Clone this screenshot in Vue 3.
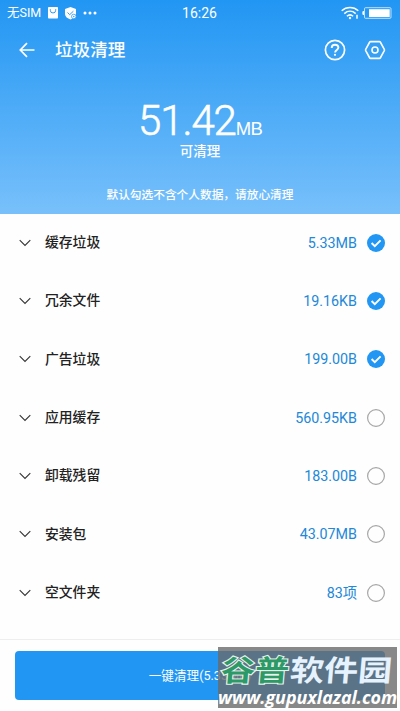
<script setup>
const rows = [
  { name: '缓存垃圾', size: '5.33MB', on: true },
  { name: '冗余文件', size: '19.16KB', on: true },
  { name: '广告垃圾', size: '199.00B', on: true },
  { name: '应用缓存', size: '560.95KB', on: false },
  { name: '卸载残留', size: '183.00B', on: false },
  { name: '安装包', size: '43.07MB', on: false },
  { name: '空文件夹', size: '83项', on: false },
]
</script>

<template>
  <div class="screen">
    <header class="hero">
      <div class="status">
        <div class="side">
          <span class="sim">无SIM</span>
          <svg class="bag" width="10" height="12" viewBox="0 0 10 12">
            <rect width="10" height="11.5" rx=".8" fill="#fff" />
            <path d="M2.3 2.2v1.1a2.7 2.7 0 0 0 5.4 0V2.2" fill="none" stroke="#2f9cf3" stroke-width="1" />
          </svg>
          <svg class="shield" width="12" height="13" viewBox="0 0 12 13">
            <path d="M5.5 0 11 2v5c0 2.700-2.500 4.500-5.500 5.500C2.500 11.500 0 9.700 0 7V2Z" fill="#fff" />
            <path d="m2.500 5.500 2.200 2.200 3.700-3.500" fill="none" stroke="#2f9cf3" />
            <circle cx="8.800" cy="9.500" r="2.300" fill="#fff" stroke="#2f9cf3" stroke-width=".8" />
            <circle cx="8.800" cy="9.500" r=".7" fill="#2f9cf3" />
          </svg>
          <svg class="dots" width="14" height="4" viewBox="0 0 14 4" fill="#fff">
            <circle cx="2" cy="2" r="1.500" /><circle cx="7" cy="2" r="1.500" /><circle cx="12" cy="2" r="1.500" />
          </svg>
        </div>
        <span class="time">16:26</span>
        <div class="side right">
          <svg width="19" height="14" viewBox="0 0 19 14" fill="none" stroke="#fff" stroke-width="1.500">
            <path d="M.7 4.800c4.800-4.300 11.800-4.300 16.600 0M3.300 7.600c3.400-3 8-3 11.400 0M5.900 10.200c2-1.700 4.200-1.700 6.200 0" />
            <circle cx="9" cy="12" r="1.200" fill="#fff" stroke="none" />
            <path d="M16 8.700v4" />
          </svg>
          <svg class="battery" width="30" height="12" viewBox="0 0 30 12">
            <path d="M2 4H1.200Q.3 4 .3 6t.9 2H2" fill="#fff" />
            <rect x="2.500" y=".7" width="26.500" height="10.600" rx="1" fill="none" stroke="#fff" stroke-opacity=".7" />
            <rect x="7" y="2.200" width="20.700" height="7.800" fill="#fff" />
          </svg>
        </div>
      </div>
      <nav class="bar">
        <svg class="back" width="16" height="16" viewBox="0 0 16 16" fill="none" stroke="#fff" stroke-width="1.700">
          <path d="M15.500 8H1.500M8 1.200 1.300 8 8 14.800" />
        </svg>
        <h1>垃圾清理</h1>
        <svg class="help" width="22" height="22" viewBox="0 0 22 22" fill="none" stroke="#fff">
          <circle cx="11" cy="11" r="9.600" stroke-width="1.700" />
          <path d="M7.700 8.900C7.700 7 9.100 5.700 11 5.700s3.400 1.200 3.400 2.900c0 2.300-3.300 2.400-3.300 4.900" stroke-width="1.900" />
          <circle cx="11" cy="15.800" r="1.100" fill="#fff" stroke="none" />
        </svg>
        <svg class="gear" width="22" height="22" viewBox="0 0 22 22" fill="none" stroke="#fff" stroke-width="1.600">
          <path d="M6.500 2.600h9Q16 2.600 16.300 3l4 7.400q.3.600 0 1.200l-4 7.400q-.3.400-.8.400h-9q-.5 0-.8-.4l-4-7.400q-.3-.6 0-1.200l4-7.400q.3-.4.800-.4Z" />
          <circle cx="11" cy="11" r="3" />
        </svg>
      </nav>
      <div class="total"><span class="num">51.42</span><span class="unit">MB</span></div>
      <div class="can">可清理</div>
      <div class="note">默认勾选不含个人数据，请放心清理</div>
    </header>

    <ul class="list">
      <li v-for="row in rows" :key="row.name">
        <svg class="chev" width="12" height="8" viewBox="0 0 12 8" fill="none" stroke="#333" stroke-width="1.100">
          <path d="m.7 1.200 5.300 5.300 5.300-5.300" />
        </svg>
        <span class="name">{{ row.name }}</span>
        <span class="size">{{ row.size }}</span>
        <svg class="check" width="18" height="18" viewBox="0 0 18 18" fill="none">
          <template v-if="row.on">
            <circle cx="9" cy="9" r="9" fill="#2196f3" />
            <path d="m4.600 9 3.200 3.200 5.800-5.800" stroke="#fff" stroke-width="1.900" />
          </template>
          <circle v-else cx="9" cy="9" r="8.400" stroke="#a6a6a6" stroke-width="1.200" />
        </svg>
      </li>
    </ul>

    <footer class="foot">
      <button class="clean">一键清理(5.33MB)</button>
      <div class="mark">
        <div class="brand"><span class="green">谷普</span><span class="white">软件园</span></div>
        <div class="url">www.gupuxlazal.com</div>
      </div>
    </footer>
  </div>
</template>

<style>
body { background: #fefefe; overflow: hidden; }
</style>

<style scoped>
* { box-sizing: border-box; }
.screen { width: 400px; height: 711px; display: flex; flex-direction: column; overflow: hidden; background: #fefefe; font-family: Roboto, "Noto Sans CJK SC", sans-serif; color: #222; }
svg { display: block; flex: none; }
.hero { height: 214px; flex: none; color: #fff; background: linear-gradient(#2196f3, #78c0fb); display: flex; flex-direction: column; align-items: center; }
.status { width: 400px; height: 26px; display: flex; align-items: center; padding: 0 8px 0 7px; }
.side { flex: 1; display: flex; align-items: center; }
.right { justify-content: flex-end; gap: 2px; }
.sim { font-size: 12.500px; line-height: 18px; width: 36px; white-space: nowrap; }
.bag { margin-left: 5px; }
.shield { margin-left: 7px; }
.dots { margin-left: 6px; }
.time { font-size: 14px; line-height: 18px; }
.bar { width: 400px; height: 48px; display: flex; align-items: center; padding: 0 14px 0 19px; }
.bar h1 { margin: 0 auto 0 20px; font-size: 17.600px; line-height: 26px; font-weight: 500; }
.gear { margin-left: 18px; }
.total { height: 46px; margin-top: 24px; display: flex; align-items: baseline; line-height: 46px; }
.num { font-size: 42px; font-weight: 300; letter-spacing: -1.100px; -webkit-text-stroke: .6px #fff; }
.unit { font: 18.500px "Liberation Sans", sans-serif; letter-spacing: -.8px; }
.can { font-size: 13.500px; line-height: 14px; font-weight: 500; }
.note { font-size: 11.700px; line-height: 18px; margin-top: 28px; font-weight: 500; }
.list { margin: 0; padding: 0; list-style: none; height: 408.300px; flex: none; display: flex; flex-direction: column; }
.list li { flex: 1; display: flex; align-items: center; padding: 0 15px 1px 19px; }
.name { margin-left: 14px; margin-right: auto; font-size: 13.800px; line-height: 20px; font-weight: 500; padding-bottom: 1px; }
.size { color: #2288d8; font-size: 14.300px; line-height: 20px; margin-right: 10px; }
.foot { position: relative; margin-top: auto; height: 72px; flex: none; border-top: 1px solid #eee; padding: 11px 15px; }
.clean { display: block; width: 370px; height: 49px; border: 0; border-radius: 4px; background: #2196f3; color: #fff; font: 400 12.600px/47px Roboto, "Noto Sans CJK SC", sans-serif; padding: 0; }
.mark { position: absolute; left: 218px; top: 7px; width: 179px; height: 61px; background: rgba(106, 106, 106, .8); overflow: hidden; white-space: nowrap; }
.brand { display: flex; height: 42px; line-height: 48px; font-size: 34px; font-weight: 700; padding-left: 3px; gap: 1px; transform: skewX(-5deg) scaleY(.86); transform-origin: 50% 60%; }
.green { color: #2d9966; -webkit-text-stroke: 2.500px #e6f2ec; paint-order: stroke fill; }
.white { color: #e6f3ff; }
.url { color: #fff; font: italic 700 17.900px/17px "Open Sans", sans-serif; height: 19px; }
</style>
